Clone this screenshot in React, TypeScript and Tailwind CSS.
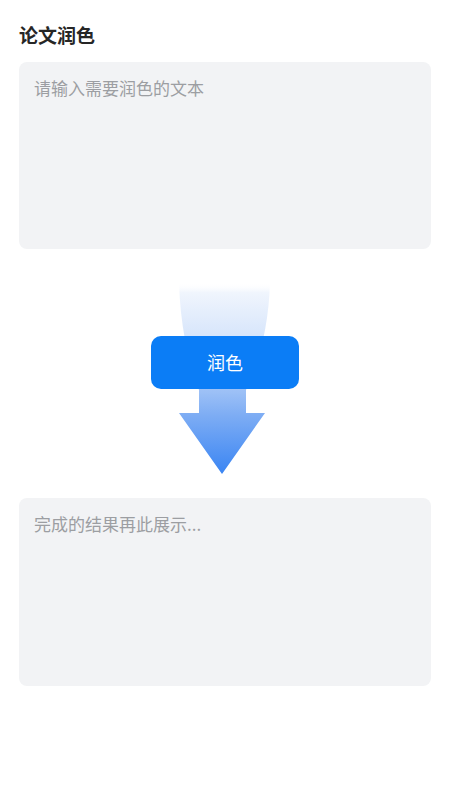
import React from "react";

const cjk = { fontFamily: '"Noto Sans CJK SC", "Noto Sans", sans-serif' };

function FlowArrow() {
  return (
    <svg width="92" height="191" viewBox="0 0 92 191" className="block">
      <defs>
        <linearGradient id="flow" x1="0" y1="0" x2="0" y2="1">
          <stop offset="0" stopColor="#ffffff" stopOpacity="0" />
          <stop offset="0.05" stopColor="#f0f5fd" />
          <stop offset="0.27" stopColor="#d8e6fb" />
          <stop offset="0.57" stopColor="#9cc0f6" />
          <stop offset="0.69" stopColor="#7eadf4" />
          <stop offset="1" stopColor="#3a85f3" />
        </linearGradient>
      </defs>
      <path
        d="M0 0 L91 0 Q89 60 67 107 L67 130 L86 130 L43 191 L0 130 L20 130 L20 107 Q2 60 0 0 Z"
        fill="url(#flow)"
      />
    </svg>
  );
}

export default function App() {
  return (
    <div className="min-h-[800px] w-full bg-white px-[19px] pt-[22px]" style={cjk}>
      <h1 className="h-[26px] text-[19px] font-bold leading-[26px] text-[#262626]">论文润色</h1>

      <div className="mt-[14px] h-[187px] rounded-[8px] bg-[#f2f3f5] px-[15px] pt-[16px]">
        <p className="text-[17px] leading-[20px] text-[#9c9ea2]">请输入需要润色的文本</p>
      </div>

      <div className="relative flex h-[249px] flex-col items-center pt-[34px]">
        <FlowArrow />
        <button className="absolute left-1/2 top-[87px] flex h-[53px] w-[148px] -translate-x-1/2 items-center justify-center rounded-[10px] bg-[#0b7df6] text-[18px] text-white">
          润色
        </button>
      </div>

      <div className="h-[188px] rounded-[8px] bg-[#f2f3f5] px-[15px] pt-[16px]">
        <p className="text-[17px] leading-[20px] text-[#9c9ea2]">完成的结果再此展示...</p>
      </div>
    </div>
  );
}
